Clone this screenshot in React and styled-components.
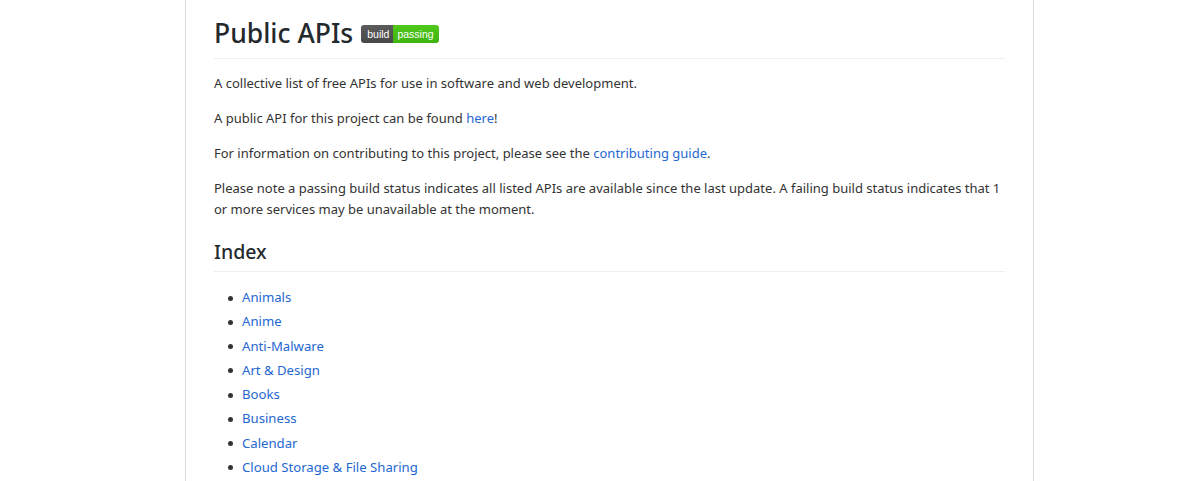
import React from "react";
import styled, { createGlobalStyle } from "styled-components";

const GlobalStyle = createGlobalStyle`
  html, body {
    margin: 0;
    padding: 0;
    background: #fff;
    height: 481px;
    overflow: hidden;
  }
`;

const index = [
  "Animals",
  "Anime",
  "Anti-Malware",
  "Art & Design",
  "Books",
  "Business",
  "Calendar",
  "Cloud Storage & File Sharing",
];

export default function App() {
  return (
    <>
      <GlobalStyle />
      <Sheet>
        <Title>
          Public APIs
          <Badge aria-label="build passing">
            <BadgeLabel>build</BadgeLabel>
            <BadgeValue>passing</BadgeValue>
          </Badge>
        </Title>
        <Para>A collective list of free APIs for use in software and web development.</Para>
        <Para>A public API for this project can be found <Link href="#">here</Link>!</Para>
        <Para>For information on contributing to this project, please see the <Link href="#">contributing guide</Link>.</Para>
        <Para>Please note a passing build status indicates all listed APIs are available since the last update. A failing build status indicates that 1 or more services may be unavailable at the moment.</Para>
        <Heading>Index</Heading>
        <IndexList>
          {index.map(item => (
            <IndexItem key={item}><Link href="#">{item}</Link></IndexItem>
          ))}
        </IndexList>
      </Sheet>
    </>
  );
}

const Sheet = styled.article`
  box-sizing: border-box;
  width: 849px;
  height: 481px;
  margin-left: 185px;
  padding: 14px 28px 0;
  overflow: hidden;
  background: #fff;
  border-left: 1px solid #ddd;
  border-right: 1px solid #ddd;
  color: #333;
  font-family: "Noto Sans", "Open Sans", sans-serif;
  font-size: 13px;
  line-height: 21px;
`;

const Title = styled.h1`
  display: flex;
  align-items: center;
  margin: 0 0 14px;
  padding-bottom: 6px;
  border-bottom: 1px solid #eee;
  color: #24292e;
  font-size: 26.5px;
  font-weight: 500;
  line-height: 38px;
`;

const Badge = styled.span`
  display: inline-flex;
  height: 18px;
  margin: 2px 0 0 8px;
  overflow: hidden;
  border-radius: 3px;
  font-family: "Liberation Sans", Arial, sans-serif;
  font-size: 10.5px;
  font-weight: 400;
  line-height: 18px;
  color: #fff;
`;

const BadgeLabel = styled.span`
  padding: 0 4px 0 6px;
  background: linear-gradient(#5c5c5c, #484848);
`;

const BadgeValue = styled.span`
  padding: 0 5px 0 4px;
  background: linear-gradient(#50c81a, #3fb30f);
`;

const Para = styled.p`
  margin: 0 0 14px;
`;

const Link = styled.a`
  color: #2468d2;
  text-decoration: none;
`;

const Heading = styled.h2`
  margin: 17px 0 15px;
  padding-bottom: 5px;
  border-bottom: 1px solid #eee;
  color: #24292e;
  font-size: 19.5px;
  font-weight: 500;
  line-height: 29px;
`;

const IndexList = styled.ul`
  margin: 0;
  padding: 0 0 0 28px;
  list-style: none;
  font-size: 13.15px;
`;

const IndexItem = styled.li`
  display: flex;
  align-items: center;
  margin-bottom: 3.25px;

  &::before {
    content: "";
    flex: none;
    width: 5px;
    height: 5px;
    margin: 1px 9px 0 -14px;
    border-radius: 50%;
    background: #333;
  }
`;
